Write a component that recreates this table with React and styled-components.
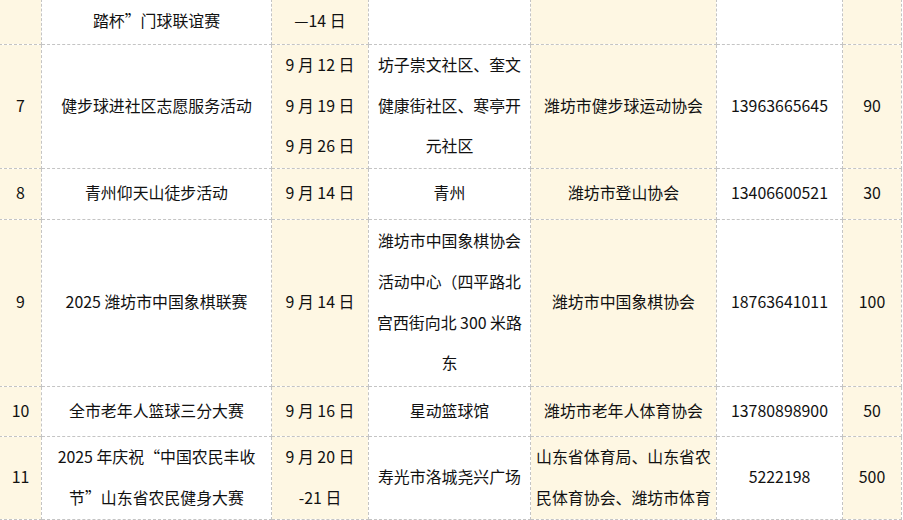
import React from "react"
import styled, { createGlobalStyle } from "styled-components"

const GlobalStyle = createGlobalStyle`
    html, body {
        margin: 0;
        padding: 0;
        background: #ffffff;
        overflow: hidden;
    }
`

const Page = styled.div`
    width: 903px;
    height: 520px;
    overflow: hidden;
    background: #ffffff;
`

const Table = styled.table`
    width: 902px;
    margin: -1px 0 0 -1px;
    border-collapse: collapse;
    table-layout: fixed;
    font-family: "Noto Sans CJK SC", "Noto Sans", sans-serif;
    font-size: 15.9px;
    color: #111111;
`

const Row = styled.tr`
    height: ${props => props.$height}px;
`

const Cell = styled.td`
    border: 1px dashed #c4c4c4;
    padding: 0 2px 1px;
    text-align: center;
    vertical-align: middle;
    line-height: 40.6px;
    white-space: nowrap;
    overflow: hidden;

    &:nth-child(odd) {
        background: #fef7e3;
    }
`

const widths = [42, 230, 97, 162, 186, 126, 59]

const rows = [
    {
        height: 45,
        cells: [[""], ["踏杯”门球联谊赛"], ["—14 日"], [""], [""], [""], [""]]
    },
    {
        height: 124,
        cells: [
            ["7"],
            ["健步球进社区志愿服务活动"],
            ["9 月 12 日", "9 月 19 日", "9 月 26 日"],
            ["坊子崇文社区、奎文", "健康街社区、寒亭开", "元社区"],
            ["潍坊市健步球运动协会"],
            ["13963665645"],
            ["90"]
        ]
    },
    {
        height: 51,
        cells: [["8"], ["青州仰天山徒步活动"], ["9 月 14 日"], ["青州"], ["潍坊市登山协会"], ["13406600521"], ["30"]]
    },
    {
        height: 167,
        cells: [
            ["9"],
            ["2025 潍坊市中国象棋联赛"],
            ["9 月 14 日"],
            ["潍坊市中国象棋协会", "活动中心（四平路北", "宫西街向北 300 米路", "东"],
            ["潍坊市中国象棋协会"],
            ["18763641011"],
            ["100"]
        ]
    },
    {
        height: 50,
        cells: [["10"], ["全市老年人篮球三分大赛"], ["9 月 16 日"], ["星动篮球馆"], ["潍坊市老年人体育协会"], ["13780898900"], ["50"]]
    },
    {
        height: 81,
        cells: [
            ["11"],
            ["2025 年庆祝“中国农民丰收", "节”山东省农民健身大赛"],
            ["9 月 20 日", "-21 日"],
            ["寿光市洛城尧兴广场"],
            ["山东省体育局、山东省农", "民体育协会、潍坊市体育"],
            ["5222198"],
            ["500"]
        ]
    }
]

const App = () => {
    return (
        <Page>
            <GlobalStyle />
            <Table>
                <colgroup>
                    {widths.map((w, index) => (
                        <col key={index} style={{ width: w }} />
                    ))}
                </colgroup>
                <tbody>
                    {rows.map((row, rowIndex) => (
                        <Row key={rowIndex} $height={row.height}>
                            {row.cells.map((lines, cellIndex) => (
                                <Cell key={cellIndex}>
                                    {lines.map((line, lineIndex) => (
                                        <React.Fragment key={lineIndex}>
                                            {lineIndex > 0 && <br />}
                                            {line}
                                        </React.Fragment>
                                    ))}
                                </Cell>
                            ))}
                        </Row>
                    ))}
                </tbody>
            </Table>
        </Page>
    )
}

export default App
